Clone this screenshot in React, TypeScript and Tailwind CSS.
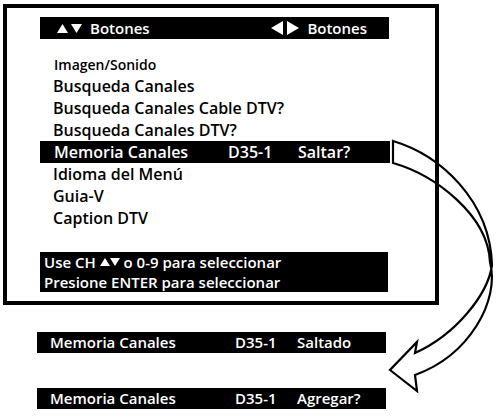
const Up = ({ s = 10 }: { s?: number }) => (
  <svg width={s} height={s} viewBox="0 0 10 10" className="inline-block">
    <polygon points="5,1 10,9 0,9" fill="currentColor" />
  </svg>
);
const Down = ({ s = 10 }: { s?: number }) => (
  <svg width={s} height={s} viewBox="0 0 10 10" className="inline-block">
    <polygon points="0,1 10,1 5,9" fill="currentColor" />
  </svg>
);
const Left = () => (
  <svg width="12" height="14" viewBox="0 0 12 14" className="inline-block">
    <polygon points="12,0 12,14 0,7" fill="currentColor" />
  </svg>
);
const Right = () => (
  <svg width="12" height="14" viewBox="0 0 12 14" className="inline-block">
    <polygon points="0,0 0,14 12,7" fill="currentColor" />
  </svg>
);

const items = [
  "Busqueda Canales",
  "Busqueda Canales Cable DTV?",
  "Busqueda Canales DTV?",
];

const StatusBar = ({ state }: { state: string }) => (
  <div className="ml-[37px] w-[349px] h-[21px] bg-black text-white flex items-center text-[15px] font-semibold">
    <span className="pl-[13px] w-[198px]">Memoria Canales</span>
    <span className="w-[62px]">D35-1</span>
    <span>{state}</span>
  </div>
);

export default function App() {
  return (
    <div
      className="relative w-[498px] h-[418px] bg-white text-black overflow-hidden"
      style={{ fontFamily: '"Open Sans", "DejaVu Sans", sans-serif' }}
    >
      {/* menu screen */}
      <div className="ml-[3px] mt-[4px] w-[436px] h-[301px] border-4 border-black flex flex-col pl-[33px] pt-[9px]">
        <div className="w-[349px] h-[22px] bg-black text-white flex items-center justify-between pl-[17px] pr-[22px] text-[15px] font-semibold">
          <span className="flex items-center gap-[3px]">
            <Up s={11} />
            <Down s={11} />
            <span className="ml-[5px]">Botones</span>
          </span>
          <span className="flex items-center gap-[4px]">
            <Left />
            <Right />
            <span className="ml-[4px]">Botones</span>
          </span>
        </div>

        <div className="mt-[14px] flex flex-col">
          <div className="h-[22px] flex items-center pl-[14px] text-[14px] font-semibold">Imagen/Sonido</div>
          {items.map((t) => (
            <div key={t} className="h-[22px] flex items-center pl-[13px] text-[16px] font-semibold">
              {t}
            </div>
          ))}
          <div className="w-[350px] h-[22px] bg-black text-white flex items-center text-[16px] font-semibold">
            <span className="pl-[14px] w-[188px]">Memoria Canales</span>
            <span className="w-[70px]">D35-1</span>
            <span>Saltar?</span>
          </div>
          {["Idioma del Menú", "Guia-V", "Caption DTV"].map((t) => (
            <div key={t} className="h-[22px] flex items-center pl-[13px] text-[16px] font-semibold">
              {t}
            </div>
          ))}
        </div>

        <div className="mt-[23px] w-[348px] h-[40px] bg-black text-white flex flex-col justify-center pl-[4px] text-[15px] font-semibold leading-[20px]">
          <div className="flex items-center h-[20px]">
            <span>Use CH&nbsp;</span>
            <Up s={10} />
            <Down s={10} />
            <span>&nbsp;o 0-9 para seleccionar</span>
          </div>
          <div className="h-[20px]">Presione ENTER para seleccionar</div>
        </div>
      </div>

      <div className="mt-[27px]">
        <StatusBar state="Saltado" />
      </div>
      <div className="mt-[35px]">
        <StatusBar state="Agregar?" />
      </div>

      {/* curved arrow */}
      <svg className="absolute left-0 top-0" width="498" height="418" viewBox="0 0 498 418">
        <path
          d="M393,141 C440,155 490,200 492,265 C488,295 455,335 415,353 L417,342 L390,370 L417,391 L415,375 C470,355 500,300 490,262 C488,215 435,175 393,163 Z"
          fill="none"
          stroke="black"
          strokeWidth="2.2"
          strokeLinejoin="miter"
        />
      </svg>
    </div>
  );
}
